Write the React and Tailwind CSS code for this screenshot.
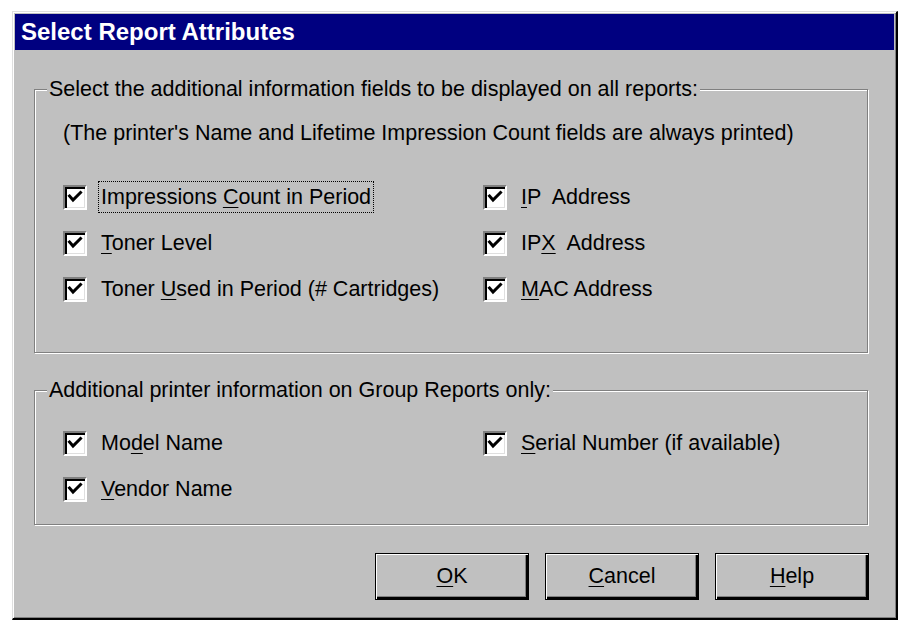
import React from 'react'

const Check = () => (
  <span className="w-[24px] h-[25px] shrink-0 bg-white border-t-2 border-l-2 border-t-[#808080] border-l-[#808080] border-b-2 border-r-2 border-b-white border-r-white shadow-[inset_2px_2px_0_#000,inset_-1px_-1px_0_#dfdfdf] flex items-center justify-center">
    <svg width="16" height="16" viewBox="0 0 16 16">
      <path d="M2.5 7 L6 11 L13.5 3.5" fill="none" stroke="#000" strokeWidth="3" strokeLinecap="square" />
    </svg>
  </span>
)

const U = ({ children }) => <span className="underline underline-offset-[3px] decoration-1">{children}</span>

const Option = ({ children, focused }) => (
  <div className="flex items-center gap-[11px] h-[26px]">
    <Check />
    <span
      className={`whitespace-pre px-[2px] py-[3px] leading-[24px] border ${
        focused ? 'border-dotted border-black' : 'border-transparent'
      }`}
    >
      {children}
    </span>
  </div>
)

const Group = ({ title, className, children }) => (
  <fieldset
    className={`ml-[19px] mr-[26px] px-[12px] border border-[#808080] shadow-[inset_1px_1px_0_#fff,1px_1px_0_#fff] ${className}`}
  >
    <legend className="px-[2px] leading-[22px] bg-[#c0c0c0]">{title}</legend>
    <div className="pl-[16px]">{children}</div>
  </fieldset>
)

const Button = ({ children }) => (
  <button className="w-[154px] h-[47px] border border-black bg-[#c0c0c0] shadow-[inset_1px_1px_0_#fff,inset_-2px_-2px_0_#000,inset_-3px_-3px_0_#808080] text-[21.5px]">
    {children}
  </button>
)

export default function App() {
  return (
    <div className="min-h-[626px] bg-white pt-[11px] pl-[12px] font-['Liberation_Sans',Arial,sans-serif] text-black text-[21.5px]">
      <div className="w-[886px] h-[609px] bg-[#c0c0c0] p-[2px] border-t border-l border-t-[#dfdfdf] border-l-[#dfdfdf] border-r-2 border-b-2 border-r-black border-b-black shadow-[inset_1px_1px_0_#fff,inset_-1px_-1px_0_#808080] flex flex-col">
        <div className="h-[36px] bg-[#000080] text-white font-bold text-[24px] flex items-center pl-[6px]">
          Select Report Attributes
        </div>

        <Group title="Select the additional information fields to be displayed on all reports:" className="mt-[28px] pb-[50px]">
          <div className="pt-[22px] leading-[22px]">
            (The printer's Name and Lifetime Impression Count fields are always printed)
          </div>
          <div className="mt-[40px] grid grid-cols-[420px_1fr] gap-y-[20px]">
            <Option focused>
              Impressions <U>C</U>ount in Period
            </Option>
            <Option>
              <U>I</U>P  Address
            </Option>
            <Option>
              <U>T</U>oner Level
            </Option>
            <Option>
              IP<U>X</U>  Address
            </Option>
            <Option>
              Toner <U>U</U>sed in Period (# Cartridges)
            </Option>
            <Option>
              <U>M</U>AC Address
            </Option>
          </div>
        </Group>

        <Group title="Additional printer information on Group Reports only:" className="mt-[26px] pb-[22px]">
          <div className="pt-[29px] grid grid-cols-[420px_1fr] gap-y-[20px]">
            <Option>
              Mo<U>d</U>el Name
            </Option>
            <Option>
              <U>S</U>erial Number (if available)
            </Option>
            <Option>
              <U>V</U>endor Name
            </Option>
          </div>
        </Group>

        <div className="mt-[28px] mr-[25px] flex justify-end gap-[16px]">
          <Button>
            <U>O</U>K
          </Button>
          <Button>
            <U>C</U>ancel
          </Button>
          <Button>
            <U>H</U>elp
          </Button>
        </div>
      </div>
    </div>
  )
}
